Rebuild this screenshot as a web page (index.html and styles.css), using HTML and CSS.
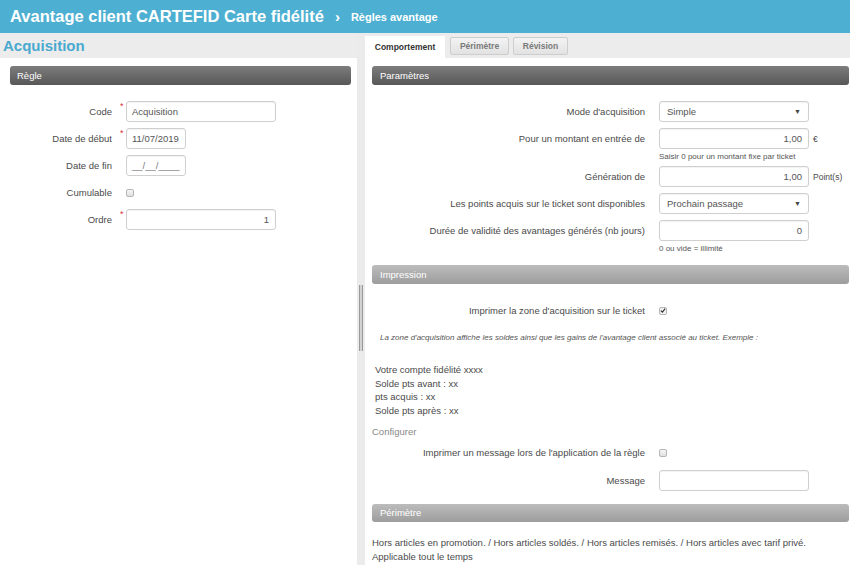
FILE: index.html
```
<!DOCTYPE html>
<html lang="fr">
<head>
<meta charset="utf-8">
<title>Avantage client CARTEFID</title>
<link rel="stylesheet" href="styles.css">
</head>
<body>
<header class="topbar">
  <span class="app-title">Avantage client CARTEFID Carte fidélité</span>
  <span class="crumb-sep">›</span>
  <span class="crumb">Règles avantage</span>
</header>
<div class="main">
  <section class="left">
    <div class="page-title">Acquisition</div>
    <div class="left-body">
      <div class="sec-head dark">Règle</div>
      <div class="form">
        <div class="row"><span class="lbl lbl-left">Code</span><span class="req">*</span><div class="field w150">Acquisition</div></div>
        <div class="row"><span class="lbl lbl-left">Date de début</span><span class="req">*</span><div class="field w60">11/07/2019</div></div>
        <div class="row"><span class="lbl lbl-left">Date de fin</span><span class="req"></span><div class="field w60 mask">__/__/____</div></div>
        <div class="row"><span class="lbl lbl-left">Cumulable</span><span class="req"></span><span class="cb"></span></div>
        <div class="row row-ordre"><span class="lbl lbl-left">Ordre</span><span class="req">*</span><div class="field w150 num">1</div></div>
      </div>
    </div>
  </section>
  <div class="splitter"><div class="grip"></div></div>
  <section class="right">
    <nav class="tabs">
      <span class="tab active">Comportement</span>
      <span class="tab t-peri">Périmètre</span>
      <span class="tab t-rev">Révision</span>
    </nav>
    <div class="right-body">
      <div class="sec-head dark">Paramètres</div>
      <div class="form">
        <div class="row"><span class="lbl lbl-right">Mode d'acquisition</span><span class="req"></span><div class="field w150 select"><span>Simple</span><span class="arrow">▼</span></div></div>
        <div class="row"><span class="lbl lbl-right">Pour un montant en entrée de</span><span class="req"></span><div class="field w150 num">1,00</div><span class="suffix">€</span></div>
        <div class="help">Saisir 0 pour un montant fixe par ticket</div>
        <div class="row"><span class="lbl lbl-right">Génération de</span><span class="req"></span><div class="field w150 num">1,00</div><span class="suffix">Point(s)</span></div>
        <div class="row"><span class="lbl lbl-right">Les points acquis sur le ticket sont disponibles</span><span class="req"></span><div class="field w150 select"><span>Prochain passage</span><span class="arrow">▼</span></div></div>
        <div class="row"><span class="lbl lbl-right">Durée de validité des avantages générés (nb jours)</span><span class="req"></span><div class="field w150 num">0</div></div>
        <div class="help">0 ou vide = illimité</div>
      </div>
      <div class="sec-head light sec-impr">Impression</div>
      <div class="row row-first"><span class="lbl lbl-right">Imprimer la zone d'acquisition sur le ticket</span><span class="req"></span><span class="cb checked"><svg width="7" height="7" viewBox="0 0 7 7"><path d="M1 3.6 L2.8 5.4 L6 1.4" fill="none" stroke="#333" stroke-width="1.4"/></svg></span></div>
      <p class="note">La zone d'acquisition affiche les soldes ainsi que les gains de l'avantage client associé au ticket. Exemple :</p>
      <div class="sample">
        <div>Votre compte fidélité xxxx</div>
        <div>Solde pts avant : xx</div>
        <div>pts acquis : xx</div>
        <div>Solde pts après : xx</div>
      </div>
      <div class="configure">Configurer</div>
      <div class="row row-msg-cb"><span class="lbl lbl-right">Imprimer un message lors de l'application de la règle</span><span class="req"></span><span class="cb"></span></div>
      <div class="row"><span class="lbl lbl-right">Message</span><span class="req"></span><div class="field w150"></div></div>
      <div class="sec-head light sec-peri">Périmètre</div>
      <div class="peri-text">
        <div>Hors articles en promotion. / Hors articles soldés. / Hors articles remisés. / Hors articles avec tarif privé.</div>
        <div>Applicable tout le temps</div>
      </div>
    </div>
  </section>
</div>
</body>
</html>
```
FILE: styles.css
```
* { box-sizing: border-box; }
html, body { margin: 0; height: 100%; }
body {
  font-family: "Liberation Sans", Arial, sans-serif;
  font-size: 9.5px;
  color: #4a4a4a;
  background: #fff;
  overflow: hidden;
}
.topbar {
  height: 33px;
  background: #4dafd1;
  color: #fff;
  display: flex;
  align-items: center;
  padding-left: 10px;
}
.app-title { font-size: 16.5px; font-weight: bold; }
.crumb-sep { font-size: 15px; font-weight: bold; margin: 0 11px 0 11px; }
.crumb { font-size: 11px; font-weight: bold; }

.main { display: flex; height: 532px; }
.left { width: 357px; display: flex; flex-direction: column; }
.page-title {
  height: 25px;
  background: #ececec;
  color: #4aa9cf;
  font-weight: bold;
  font-size: 15px;
  line-height: 25px;
  padding-left: 3px;
}
.left-body { padding: 8px 6px 0 10px; }

.splitter {
  width: 8px;
  background: #ebebeb;
  display: flex;
  justify-content: center;
  align-items: flex-start;
  padding-top: 252px;
}
.grip {
  width: 4px;
  height: 66px;
  border-left: 1px solid #9a9a9a;
  border-right: 1px solid #9a9a9a;
  background: #d2d2d2;
}

.right { flex: 1; min-width: 0; display: flex; flex-direction: column; }
.tabs {
  height: 25px;
  background: #ececec;
  display: flex;
  align-items: flex-start;
  padding-top: 3px;
}
.tab {
  font-weight: bold;
  font-size: 8.5px;
  text-align: center;
}
.tab.active {
  width: 80px;
  height: 22px;
  line-height: 22px;
  background: #fff;
  color: #333;
}
.tab.t-peri, .tab.t-rev {
  margin-top: 1px;
  height: 18px;
  line-height: 16px;
  border: 1px solid #cdcdcd;
  border-radius: 2px;
  background: linear-gradient(#f3f3f3, #e2e2e2);
  color: #7a7a7a;
}
.tab.t-peri { width: 59px; margin-left: 5px; }
.tab.t-rev { width: 55px; margin-left: 4px; }

.right-body { padding: 8px 1px 0 7px; }

.sec-head {
  height: 19px;
  line-height: 19px;
  border-radius: 3px;
  color: #fff;
  font-size: 9.5px;
  padding-left: 8px;
}
.left-body .sec-head { padding-left: 7px; }
.dark { background: linear-gradient(#7d7d7d, #575757); }
.light { background: linear-gradient(#bcbcbc, #9d9d9d); }

.form { padding-top: 16px; }
.row {
  display: flex;
  align-items: center;
  height: 21px;
  margin-bottom: 6px;
}
.row-ordre { margin-top: 1px; }
.lbl { text-align: right; flex: none; }
.lbl-left { width: 102px; }
.lbl-right { width: 273px; }
.req {
  width: 14px;
  flex: none;
  align-self: flex-start;
  color: #d9313a;
  font-size: 9px;
  line-height: 8px;
  padding-left: 8px;
  margin-top: 1px;
}
.field {
  height: 21px;
  border: 1px solid #cfcfcf;
  border-radius: 3px;
  background: #fff;
  padding: 0 5px;
  line-height: 19px;
  color: #555;
  box-shadow: inset 0 1px 1px rgba(0, 0, 0, 0.05);
  flex: none;
}
.w150 { width: 150px; }
.w60 { width: 60px; }
.num { text-align: right; padding-right: 6px; }
.mask { color: #777; }
.select { display: flex; justify-content: space-between; padding-left: 7px; padding-right: 7px; }
.arrow { font-size: 7px; color: #444; }
.suffix { margin-left: 4px; font-size: 8.5px; }

.cb {
  width: 8px;
  height: 8px;
  border: 1px solid #b5b5b5;
  border-radius: 2px;
  background: linear-gradient(#f6f6f6, #e0e0e0);
  display: inline-flex;
  align-items: center;
  justify-content: center;
  flex: none;
}
.cb.checked { background: #f2f2f2; }

.help {
  margin: -4px 0 3px 287px;
  font-size: 8px;
  line-height: 12px;
  color: #555;
}
.sec-impr { margin-top: 10px; }
.row-first { margin-top: 16px; }
.note {
  margin: 11px 0 0;
  padding-left: 8px;
  font-size: 8px;
  font-style: italic;
  line-height: 12px;
  color: #555;
}
.sample {
  margin-top: 19px;
  padding-left: 3px;
  line-height: 13.6px;
}
.configure {
  margin-top: 9px;
  line-height: 12px;
  color: #888;
}
.row-msg-cb { margin-top: 4px; margin-bottom: 7px; }
.sec-peri { margin-top: 13px; height: 18px; line-height: 18px; }
.peri-text { margin-top: 14px; line-height: 14px; }
```
